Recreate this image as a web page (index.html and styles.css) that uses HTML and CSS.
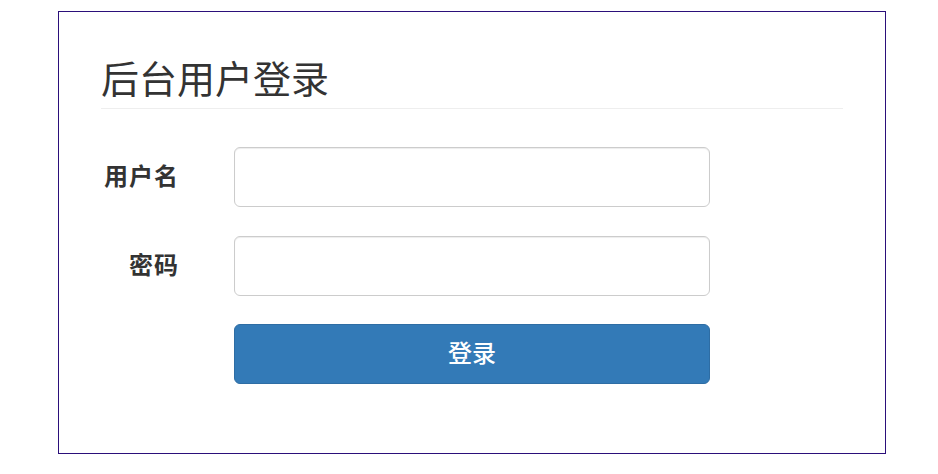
FILE: index.html
```html
<!DOCTYPE html>
<html lang="zh-CN">
<head>
    <meta charset="UTF-8">
    <meta name="viewport" content="width=device-width, initial-scale=1.0">
    <title>后台用户登录</title>
    <link rel="stylesheet" href="styles.css">
</head>
<body>
    <div class="panel">
        <h1 class="page-title">后台用户登录</h1>
        <form class="login-form" onsubmit="return false;">
            <div class="form-row">
                <label for="username">用户名</label>
                <input type="text" id="username" class="form-input">
            </div>
            <div class="form-row">
                <label for="password">密码</label>
                <input type="password" id="password" class="form-input">
            </div>
            <div class="form-row">
                <span></span>
                <button type="submit" class="btn">登录</button>
            </div>
        </form>
    </div>
</body>
</html>
```

FILE: styles.css
```css
body {
    margin: 0;
    padding: 0;
    font-family: "Noto Sans CJK SC", "Noto Sans", sans-serif;
    color: #333;
    background-color: #fff;
}
.panel {
    box-sizing: border-box;
    width: 828px;
    height: 443px;
    margin: 11px 0 0 58px;
    padding: 0 42px 0 42px;
    border: 1px solid #2b0f7a;
}
.page-title {
    margin: 44px 0 0 0;
    padding-bottom: 10px;
    font-size: 38px;
    font-weight: normal;
    line-height: 42px;
    border-bottom: 1px solid #eee;
}
.login-form {
    margin-top: 38px;
    display: flex;
    flex-direction: column;
    gap: 28.5px;
}
.form-row {
    display: grid;
    grid-template-columns: 77px 476px;
    column-gap: 56px;
    align-items: center;
}
.form-row label {
    text-align: right;
    font-size: 24px;
    font-weight: bold;
    letter-spacing: 1px;
    margin-right: -1px;
    padding-bottom: 5px;
}
.form-input {
    box-sizing: border-box;
    height: 60px;
    width: 100%;
    border: 1px solid #ccc;
    border-radius: 6px;
    box-shadow: inset 0 1px 1px rgba(0, 0, 0, 0.075);
    padding: 0 16px;
    font-size: 20px;
}
.btn {
    box-sizing: border-box;
    height: 60px;
    width: 100%;
    padding: 0 0 5px 0;
    background-color: #337ab7;
    border: 1px solid #2e6da4;
    border-radius: 6px;
    color: #fff;
    font-family: "Noto Sans CJK SC", "Noto Sans", sans-serif;
    font-size: 24px;
    font-weight: 500;
    cursor: pointer;
}
```
